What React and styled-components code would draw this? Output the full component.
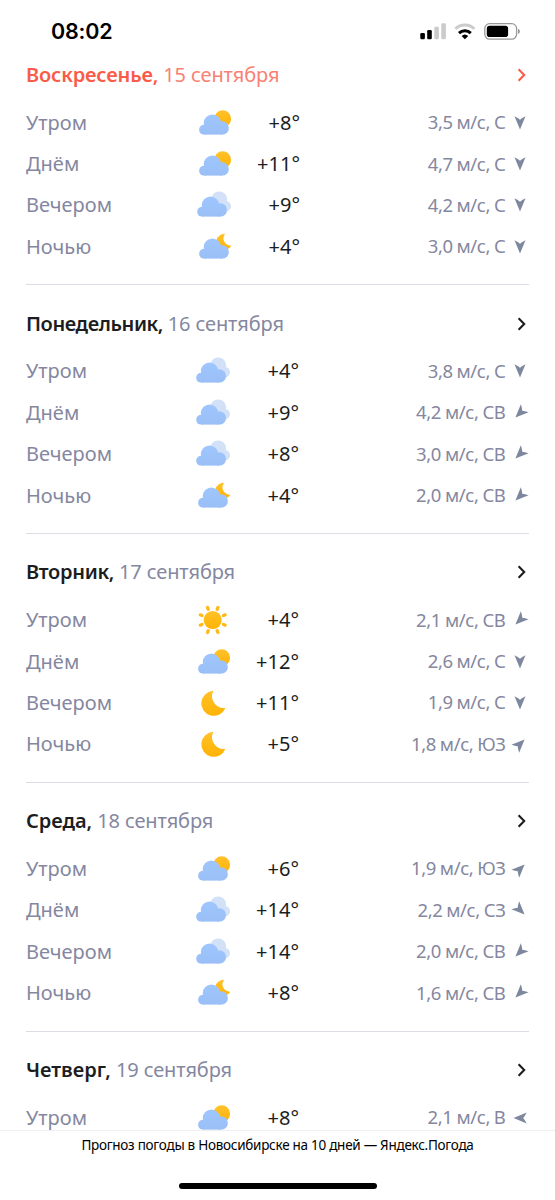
import React from 'react';
import styled, { createGlobalStyle } from 'styled-components';

const GlobalStyle = createGlobalStyle`
  * {
    box-sizing: border-box;
  }

  body {
    margin: 0;
    background: #fff;
    font-family: 'Noto Sans', 'Open Sans', sans-serif;
  }
`;

const Screen = styled.div`
  display: flex;
  flex-direction: column;
  width: 555px;
  height: 1200px;
  overflow: hidden;
  background: #fff;
`;

const StatusBar = styled.header`
  display: flex;
  flex: none;
  align-items: center;
  justify-content: space-between;
  height: 47.7px;
  padding: 15px 35px 0 51px;
`;

const Time = styled.span`
  font-family: Inter, sans-serif;
  font-size: 21.5px;
  font-weight: 600;
  line-height: 32px;
  letter-spacing: -0.2px;
  color: #000;
`;

const StatusIcons = styled.svg`
  display: block;
  width: 100px;
  height: 18px;
`;

const Forecast = styled.main`
  flex: none;
  height: 1082.3px;
  padding: 0 26px;
  overflow: hidden;
`;

const Day = styled.section`
  height: 248.75px;
`;

const DayHeader = styled.div`
  display: flex;
  align-items: center;
  justify-content: space-between;
  height: 54.2px;
  padding-right: 3px;
  color: ${({ $holiday }) => ($holiday ? '#f95c48' : '#1c1d21')};
`;

const DayTitle = styled.h2`
  margin: 0;
  font-size: 20px;
  font-weight: 600;
  line-height: 28px;
  letter-spacing: ${({ $spacing }) => $spacing}px;
  white-space: nowrap;
`;

const DayDate = styled.span`
  font-weight: 400;
  letter-spacing: -0.12px;
  color: ${({ $holiday }) => ($holiday ? '#f98173' : '#8587a0')};
`;

const Chevron = styled.svg`
  display: block;
  width: 9px;
  height: 14px;
`;

const Rows = styled.div`
  height: 182.4px;
`;

const Row = styled.div`
  display: grid;
  grid-template-columns: ${({ $first }) => ($first ? 169 : 168)}px 40px 65px 1fr 23.5px;
  align-items: center;
  height: 41.45px;
`;

const Part = styled.span`
  font-size: 20px;
  line-height: 28px;
  color: #8587a0;
`;

const WeatherIcon = styled.svg`
  display: block;
  width: 40px;
  height: 32px;
  overflow: visible;
`;

const Temp = styled.span`
  font-size: 20px;
  line-height: 28px;
  text-align: right;
  color: #1c1d21;
`;

const Wind = styled.span`
  padding-bottom: 1px;
  font-size: 18.5px;
  line-height: 28px;
  letter-spacing: -0.4px;
  word-spacing: -0.5px;
  text-align: right;
  color: #8587a0;
`;

const Arrow = styled.svg`
  display: block;
  justify-self: end;
  width: 18px;
  height: 18px;
  transform: rotate(${({ $angle }) => $angle}deg);
`;

const Divider = styled.hr`
  height: 1px;
  margin: 0;
  border: 0;
  background: #dcdce7;
`;

const Footer = styled.footer`
  display: flex;
  flex: 1;
  flex-direction: column;
  align-items: center;
  justify-content: space-between;
  padding: 4px 0 11px;
  border-top: 1px solid #efeff1;
  background: #fff;
`;

const PageTitle = styled.span`
  font-size: 13.5px;
  line-height: 20px;
  letter-spacing: -0.27px;
  color: #000;
`;

const HomeIndicator = styled.div`
  width: 198px;
  height: 6.5px;
  border-radius: 4px;
  background: #000;
`;

// 0 points down, i.e. wind from the north
const ANGLES = { С: 0, СВ: 45, В: 90, ЮЗ: 225, СЗ: -45 };

const days = [
  {
    name: 'Воскресенье',
    date: '15 сентября',
    holiday: true,
    spacing: -0.15,
    parts: [
      ['Утром', 'sunCloud', '+8°', '3,5', 'С'],
      ['Днём', 'sunCloud', '+11°', '4,7', 'С'],
      ['Вечером', 'clouds', '+9°', '4,2', 'С'],
      ['Ночью', 'moonCloud', '+4°', '3,0', 'С'],
    ],
  },
  {
    name: 'Понедельник',
    date: '16 сентября',
    spacing: -0.42,
    parts: [
      ['Утром', 'clouds', '+4°', '3,8', 'С'],
      ['Днём', 'clouds', '+9°', '4,2', 'СВ'],
      ['Вечером', 'clouds', '+8°', '3,0', 'СВ'],
      ['Ночью', 'moonCloud', '+4°', '2,0', 'СВ'],
    ],
  },
  {
    name: 'Вторник',
    date: '17 сентября',
    spacing: -0.32,
    parts: [
      ['Утром', 'sun', '+4°', '2,1', 'СВ'],
      ['Днём', 'sunCloud', '+12°', '2,6', 'С'],
      ['Вечером', 'moon', '+11°', '1,9', 'С'],
      ['Ночью', 'moon', '+5°', '1,8', 'ЮЗ'],
    ],
  },
  {
    name: 'Среда',
    date: '18 сентября',
    spacing: -0.05,
    parts: [
      ['Утром', 'sunCloud', '+6°', '1,9', 'ЮЗ'],
      ['Днём', 'clouds', '+14°', '2,2', 'СЗ'],
      ['Вечером', 'clouds', '+14°', '2,0', 'СВ'],
      ['Ночью', 'moonCloud', '+8°', '1,6', 'СВ'],
    ],
  },
  {
    name: 'Четверг',
    date: '19 сентября',
    spacing: 0,
    parts: [['Утром', 'sunCloud', '+8°', '2,1', 'В']],
  },
];

function Cloud() {
  return (
    <g fill="url(#cloud)">
      <circle cx="17.4" cy="16.1" r="8.7" />
      <circle cx="9" cy="22.7" r="4.9" />
      <circle cx="27.2" cy="20.9" r="6.7" />
      <rect x="9" y="17.8" width="18.2" height="9.8" />
    </g>
  );
}

function Weather({ type }) {
  return (
    <WeatherIcon viewBox="0 0 40 32">
      {type === 'sunCloud' && (
        <>
          <circle cx="27.7" cy="11.7" r="8.4" fill="url(#sun)" />
          <Cloud />
        </>
      )}
      {type === 'clouds' && (
        <g transform="translate(-1.9 0)">
          <g fill="#d2e1f7">
            <circle cx="26.1" cy="10.5" r="8" />
            <circle cx="32.4" cy="17.2" r="5.5" />
          </g>
          <Cloud />
        </g>
      )}
      {type === 'moonCloud' && (
        <>
          <path
            d="M30 2.9A8 8 0 1 0 36.4 14.6A7.3 7.3 0 0 1 30 2.9Z"
            fill="url(#sun)"
          />
          <Cloud />
        </>
      )}
      {type === 'sun' && (
        <>
          <circle cx="18.7" cy="16" r="9.1" fill="url(#sun)" />
          {[22.5, 67.5, 112.5, 157.5, 202.5, 247.5, 292.5, 337.5].map(a => (
            <rect
              key={a}
              x="17.05"
              y="0.9"
              width="3.3"
              height="5.1"
              rx="1.6"
              fill="#ffba1a"
              transform={`rotate(${a} 18.7 16)`}
            />
          ))}
        </>
      )}
      {type === 'moon' && (
        <path
          d="M19.4 3.8A12.5 12.5 0 1 0 31.4 20.9A11.8 11.8 0 0 1 19.4 3.8Z"
          fill="url(#sun)"
        />
      )}
    </WeatherIcon>
  );
}

function Gradients() {
  return (
    <svg width="0" height="0" style={{ position: 'absolute' }}>
      <defs>
        <linearGradient
          id="cloud"
          gradientUnits="userSpaceOnUse"
          x1="0"
          y1="7"
          x2="0"
          y2="28"
        >
          <stop offset="0" stopColor="#9fc6ff" />
          <stop offset="1" stopColor="#9abff6" />
        </linearGradient>
        <linearGradient id="sun" x1="0" y1="0" x2="0" y2="1">
          <stop offset="0" stopColor="#ffc12b" />
          <stop offset="1" stopColor="#ffb303" />
        </linearGradient>
      </defs>
    </svg>
  );
}

function PhoneStatus() {
  return (
    <StatusIcons viewBox="420 22 100 18">
      <rect x="420.3" y="33" width="4.6" height="6.3" rx="1.3" />
      <rect x="427.2" y="30" width="4.6" height="9.3" rx="1.3" />
      <rect x="434.3" y="26.7" width="4.6" height="12.6" rx="1.3" fill="#cbcbcb" />
      <rect x="441.3" y="23.3" width="4.6" height="16" rx="1.3" fill="#cbcbcb" />
      <g fill="none" strokeWidth="3">
        <path d="M455.4 28.8a13.6 13.6 0 0 1 19 0" stroke="#cbcbcb" />
        <path d="M459 33.1a8.5 8.5 0 0 1 11.8 0" stroke="#000" />
      </g>
      <path d="M461.6 36a4.8 4.8 0 0 1 6.6 0l-3.3 3.3Z" />
      <rect
        x="484.8"
        y="23.7"
        width="31.8"
        height="15.4"
        rx="4.8"
        fill="none"
        stroke="#999"
        strokeWidth="1.3"
      />
      <rect x="486.8" y="25.7" width="21.3" height="11.4" rx="2.8" />
      <path d="M518 28.7q1.9.9 1.9 2.7t-1.9 2.7Z" fill="#999" />
    </StatusIcons>
  );
}

function App() {
  return (
    <Screen>
      <GlobalStyle />
      <Gradients />
      <StatusBar>
        <Time>08:02</Time>
        <PhoneStatus />
      </StatusBar>
      <Forecast>
        {days.map((day, index) => (
          <Day key={day.name}>
            <DayHeader $holiday={day.holiday}>
              <DayTitle $spacing={day.spacing}>
                {day.name},{' '}
                <DayDate $holiday={day.holiday}>{day.date}</DayDate>
              </DayTitle>
              <Chevron viewBox="0 0 9 14">
                <path
                  d="M1.6 1.3 7.2 7 1.6 12.7"
                  fill="none"
                  stroke="currentColor"
                  strokeWidth="2.1"
                />
              </Chevron>
            </DayHeader>
            <Rows>
              {day.parts.map(([part, icon, temp, speed, direction]) => (
                <Row key={part} $first={index === 0}>
                  <Part>{part}</Part>
                  <Weather type={icon} />
                  <Temp>{temp}</Temp>
                  <Wind>
                    {speed} м/с, {direction}
                  </Wind>
                  <Arrow viewBox="-9 -9 18 18" $angle={ANGLES[direction]}>
                    <path
                      d="M-5.5-6.7Q-1.8-4.8 0-3.2Q1.8-4.8 5.5-6.7L0 6.5Z"
                      fill="#7d889f"
                    />
                  </Arrow>
                </Row>
              ))}
            </Rows>
            <Divider />
          </Day>
        ))}
      </Forecast>
      <Footer>
        <PageTitle>
          Прогноз погоды в Новосибирске на 10 дней — Яндекс.Погода
        </PageTitle>
        <HomeIndicator />
      </Footer>
    </Screen>
  );
}

export default App;
